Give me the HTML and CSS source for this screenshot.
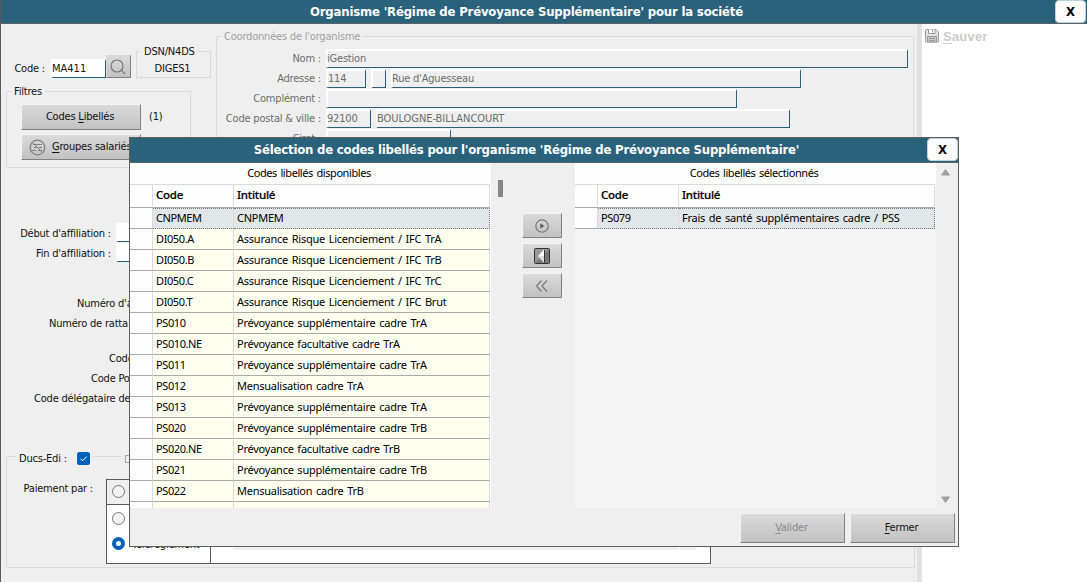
FILE: index.html
```html
<!DOCTYPE html>
<html lang="fr">
<head>
    <meta charset="UTF-8">
    <meta name="viewport" content="width=device-width, initial-scale=1.0">
    <title>Organisme</title>
    <link rel="stylesheet" href="styles.css">
</head>
<body>

<!-- Main window -->
<div class="window">
    <div class="title-bar">
        <h1>Organisme 'Régime de Prévoyance Supplémentaire' pour la société</h1>
        <button class="close-btn">X</button>
    </div>

    <div class="content">
        <div class="form">
            <div class="form-top">
                <div class="left-col">
                    <div class="code-row">
                        <label class="code-label">Code :</label>
                        <div class="field code-field">MA411</div>
                        <button class="btn search-btn">
                            <svg width="16" height="16" viewBox="0 0 16 16" fill="none" stroke="#777" stroke-width="1.200">
                                <circle cx="7" cy="7" r="6"/>
                                <path d="M11.200 11.200l3.800 3.800"/>
                            </svg>
                        </button>
                        <div class="group dsn">
                            <span class="legend">DSN/N4DS</span>
                            DIGES1
                        </div>
                    </div>
                    <div class="group filters">
                        <span class="legend">Filtres</span>
                        <div class="filter-row">
                            <button class="btn filter-btn"><span>Codes <u>L</u>ibellés</span></button>
                            <span>(1)</span>
                        </div>
                        <div class="filter-row">
                            <button class="btn filter-btn with-icon">
                                <svg width="17" height="17" viewBox="0 0 17 17" fill="none" stroke="#808080">
                                    <circle cx="8.500" cy="8.500" r="7.300" stroke-width="1.300"/>
                                    <path d="M4 5.500h9M5 8.500h4M9 11.500h4M4 4l9 9M3 11.500h4M10 8.500h3"/>
                                </svg>
                                <span><u>G</u>roupes salariés</span>
                            </button>
                        </div>
                    </div>
                </div>

                <div class="group address">
                    <span class="legend">Coordonnées de l'organisme</span>
                    <div class="row"><label>Nom :</label><div class="field w-name">iGestion</div></div>
                    <div class="row"><label>Adresse :</label><div class="field w-num">114</div><div class="field w-bis"></div><div class="field w-street">Rue d'Aguesseau</div></div>
                    <div class="row"><label>Complément :</label><div class="field w-extra"></div></div>
                    <div class="row"><label>Code postal &amp; ville :</label><div class="field w-zip">92100</div><div class="field w-city">BOULOGNE-BILLANCOURT</div></div>
                    <div class="row"><label>Siret :</label><div class="field w-siret"></div></div>
                </div>
            </div>

            <div class="details">
                <div class="detail"><label>Début d'affiliation :</label><div class="field date"></div></div>
                <div class="detail end"><label>Fin d'affiliation :</label><div class="field date"></div></div>
                <div class="detail member">Numéro d'a</div>
                <div class="detail link">Numéro de ratta</div>
                <div class="detail code">Code</div>
                <div class="detail post">Code Po</div>
                <div class="detail delegate">Code délégataire de</div>
            </div>

            <div class="group ducs">
                <div class="legend ducs-legend">
                    <span>Ducs-Edi :</span>
                    <svg width="13" height="13" viewBox="0 0 13 13">
                        <rect width="13" height="13" rx="2.500" fill="#005fb8"/>
                        <path d="M3.500 6.700l2.100 2.100 4-4.200" fill="none" stroke="#fff"/>
                    </svg>
                </div>
                <span class="legend dem-legend"><i class="box"></i></span>
                <label class="pay-label">Paiement par :</label>
                <div class="pay">
                    <div class="pay-cell top"><i class="radio"></i></div>
                    <div class="pay-cell top"></div>
                    <div class="pay-cell options">
                        <div class="option"><i class="radio"></i></div>
                        <div class="option"><i class="radio checked"></i><span>Télérèglement</span></div>
                    </div>
                    <div class="pay-cell accounts"><div class="scroll"></div><div class="scroll corner"></div></div>
                </div>
            </div>
        </div>

        <div class="side">
            <svg width="14" height="14" viewBox="0 0 14 14" fill="#e3e3e3" stroke="#999">
                <path d="M.5 1.500q0-1 1-1h9.500l2.500 2.500v9q0 1-1 1h-11q-1 0-1-1z"/>
                <path d="M3.500.5v4h6.500v-4" fill="#fff"/>
                <path d="M7.500 1v2.500"/>
                <path d="M2.500 13v-5.500h9v5.500z" fill="#c8c8c8"/>
                <path d="M4 9.500h6M4 11.500h6"/>
            </svg>
            <span class="save"><u>S</u>auver</span>
        </div>
    </div>
</div>

<!-- Selection dialog -->
<div class="dialog">
    <div class="title-bar">
        <h1>Sélection de codes libellés pour l'organisme 'Régime de Prévoyance Supplémentaire'</h1>
        <button class="close-btn">X</button>
    </div>

    <div class="lists">
        <div class="list">
            <div class="caption">Codes libellés disponibles</div>
            <table>
                <thead>
                    <tr><th class="mark"></th><th class="c-code">Code</th><th>Intitulé</th></tr>
                </thead>
                <tbody>
                    <tr class="selected"><td></td><td>CNPMEM</td><td>CNPMEM</td></tr>
                    <tr><td></td><td>DI050.A</td><td>Assurance Risque Licenciement / IFC TrA</td></tr>
                    <tr><td></td><td>DI050.B</td><td>Assurance Risque Licenciement / IFC TrB</td></tr>
                    <tr><td></td><td>DI050.C</td><td>Assurance Risque Licenciement / IFC TrC</td></tr>
                    <tr><td></td><td>DI050.T</td><td>Assurance Risque Licenciement / IFC Brut</td></tr>
                    <tr><td></td><td>PS010</td><td>Prévoyance supplémentaire cadre TrA</td></tr>
                    <tr><td></td><td>PS010.NE</td><td>Prévoyance facultative cadre TrA</td></tr>
                    <tr><td></td><td>PS011</td><td>Prévoyance supplémentaire cadre TrA</td></tr>
                    <tr><td></td><td>PS012</td><td>Mensualisation cadre TrA</td></tr>
                    <tr><td></td><td>PS013</td><td>Prévoyance supplémentaire cadre TrA</td></tr>
                    <tr><td></td><td>PS020</td><td>Prévoyance supplémentaire cadre TrB</td></tr>
                    <tr><td></td><td>PS020.NE</td><td>Prévoyance facultative cadre TrB</td></tr>
                    <tr><td></td><td>PS021</td><td>Prévoyance supplémentaire cadre TrB</td></tr>
                    <tr><td></td><td>PS022</td><td>Mensualisation cadre TrB</td></tr>
                    <tr><td></td><td></td><td>Prévoyance supplémentaire</td></tr>
                </tbody>
            </table>
        </div>

        <div class="middle">
            <div class="thumb"></div>
            <div class="moves">
                <button class="btn">
                    <svg width="14" height="14" viewBox="0 0 14 14" fill="none" stroke="#777">
                        <circle cx="7" cy="7" r="6.200" stroke-width="1.200"/>
                        <path d="M5.200 4.300L9.500 7l-4.300 2.700z" fill="#666" stroke="none"/>
                    </svg>
                </button>
                <button class="btn">
                    <svg width="16" height="16" viewBox="0 0 16 16">
                        <rect x=".5" y=".5" width="15" height="15" rx="1" fill="#777" stroke="#333"/>
                        <path d="M1 1h14L1 15z" fill="#999"/>
                        <path d="M4 8l6-6.500v13z" fill="#fff"/>
                        <path d="M4 8l6 6.500V8z" fill="#ddd"/>
                        <path d="M10.500 2v12.500" fill="none" stroke="#333"/>
                    </svg>
                </button>
                <button class="btn">
                    <svg width="14" height="14" viewBox="0 0 14 14" fill="none" stroke="#777" stroke-width="1.200">
                        <path d="M6.500 1.500L1.500 7l5 5.500M12 1.500L7 7l5 5.500"/>
                    </svg>
                </button>
            </div>
        </div>

        <div class="list chosen">
            <div class="caption">Codes libellés sélectionnés</div>
            <table>
                <thead>
                    <tr><th class="mark"></th><th class="c-code">Code</th><th>Intitulé</th></tr>
                </thead>
                <tbody>
                    <tr class="selected"><td></td><td>PS079</td><td>Frais de santé supplémentaires cadre / PSS</td></tr>
                </tbody>
            </table>
        </div>

        <div class="scrollbar">
            <svg width="9" height="7" viewBox="0 0 9 7"><path d="M4.500 .5L8.500 6h-8z" fill="#a0a0a0" stroke="#a0a0a0" stroke-linejoin="round"/></svg>
            <svg width="9" height="7" viewBox="0 0 9 7"><path d="M4.500 6.500L8.500 1h-8z" fill="#a0a0a0" stroke="#a0a0a0" stroke-linejoin="round"/></svg>
        </div>
    </div>

    <div class="footer">
        <button class="btn disabled"><span><u>V</u>alider</span></button>
        <button class="btn"><span><u>F</u>ermer</span></button>
    </div>
</div>

</body>
</html>
```
FILE: styles.css
```css
* {
    box-sizing: border-box;
}

body {
    margin: 0;
    width: 1087px;
    height: 582px;
    overflow: hidden;
    position: relative;
    font-family: "DejaVu Sans Condensed", "DejaVu Sans", sans-serif;
    font-stretch: condensed;
    font-size: 11px;
    line-height: 14px;
    letter-spacing: -0.2px;
    color: #111;
    background-color: #fff;
}

svg {
    display: block;
    flex: none;
}

u {
    text-underline-offset: 2px;
}

/* Title bars */
.title-bar {
    display: flex;
    height: 24px;
    background-color: #2b627b;
    border-bottom: 1px solid #5a6468;
}

.title-bar h1 {
    flex: 1;
    margin: 0;
    padding-right: 3px;
    font-size: 13px;
    line-height: 23px;
    letter-spacing: -0.18px;
    text-align: center;
    color: #fff;
    white-space: nowrap;
}

.close-btn {
    width: 31px;
    height: 23px;
    margin-right: 1px;
    padding: 0;
    border: 1px solid #b9d3dd;
    border-radius: 4px;
    background-color: #fdfdfd;
    font: bold 13px "DejaVu Sans Condensed", "DejaVu Sans", sans-serif;
}

/* Buttons */
.btn {
    display: flex;
    align-items: center;
    justify-content: center;
    padding: 0;
    border: 1px solid;
    border-color: #f4f4f4 #808080 #808080 #f4f4f4;
    background: linear-gradient(#dadada, #c2c2c2);
    font: inherit;
    letter-spacing: inherit;
    color: #111;
    white-space: nowrap;
}

.btn span {
    padding: 0 2px 0 0;
}

.btn.disabled {
    color: #888;
}

/* Fields */
.field {
    flex: none;
    height: 19px;
    border-style: solid;
    border-width: 2px 1px 1px 2px;
    border-color: #fff #2b5f78 #2b5f78 #fff;
    line-height: 16px;
    text-indent: -1px;
    white-space: nowrap;
}

/* Main window */
.window {
    height: 582px;
    border-left: 1px solid #5a5a5a;
}

.content {
    display: flex;
    height: 558px;
}

.form {
    width: 921px;
    padding-left: 5px;
    border-right: 5px solid #e1e1e1;
    background-color: #efefef;
}

.side {
    display: flex;
    gap: 4px;
    padding: 5px 0 0 3px;
}

.save {
    padding-top: 1px;
    font: bold 13px/14px "Liberation Sans", Arial, sans-serif;
    letter-spacing: 0.2px;
    color: #ccc;
}

.form-top {
    display: flex;
    height: 144px;
}

.left-col {
    width: 210px;
    padding-top: 27px;
}

.code-row {
    display: flex;
    align-items: flex-end;
    height: 27px;
}

.code-label {
    width: 45px;
    padding: 0 6px 2px 0;
    text-align: right;
    white-space: nowrap;
}

.code-field {
    width: 55px;
    background-color: #fff;
    letter-spacing: 0;
}

.search-btn {
    width: 25px;
    height: 23px;
    padding-right: 2px;
    border-color: #d8d8d8 #808080 #808080 #d8d8d8;
}

/* Group boxes, the legend sits on the border */
.group {
    position: relative;
    border: 1px solid #dadada;
}

.legend {
    position: absolute;
    top: -7px;
    padding: 0 3px;
    background-color: #efefef;
    white-space: nowrap;
}

.dsn {
    width: 75px;
    height: 27px;
    margin-left: 5px;
    padding: 10px 2px 0 0;
    text-align: center;
}

.dsn .legend {
    left: 4px;
}

.filters {
    width: 185px;
    height: 77px;
    margin-top: 13px;
    padding: 12px 0 0 14px;
}

.filters .legend {
    left: 4px;
}

.filter-row {
    display: flex;
    align-items: center;
    gap: 8px;
    height: 26px;
    margin-bottom: 4px;
}

.filter-btn {
    width: 120px;
    height: 26px;
}

.with-icon {
    justify-content: flex-start;
    gap: 6px;
    padding-left: 7px;
}

.address {
    width: 698px;
    height: 150px;
    margin-top: 12px;
    padding-top: 12px;
    color: #6c6c6c;
}

.address .legend {
    left: 4px;
    color: #a0a0a0;
}

.row {
    display: flex;
    gap: 5px;
    height: 20px;
}

.row label {
    width: 104px;
    padding-top: 3px;
    text-align: right;
    white-space: nowrap;
}

.w-name {
    width: 582px;
}

.w-num {
    width: 40px;
    text-indent: 0;
}

.w-bis {
    width: 15px;
}

.w-street {
    width: 410px;
}

.w-extra {
    width: 411px;
}

.w-zip {
    width: 45px;
}

.w-city {
    width: 414px;
    letter-spacing: -0.05px;
}

.w-siret {
    width: 125px;
}

/* Affiliation details */
.details {
    height: 288px;
    padding-top: 55px;
}

.detail {
    display: flex;
    height: 20px;
    padding-top: 4px;
    white-space: nowrap;
}

.detail label {
    width: 105px;
    text-align: right;
}

.detail .date {
    width: 80px;
    margin: -4px 0 0 5px;
    background-color: #fff;
}

.end {
    margin-bottom: 30px;
}

.member {
    padding-left: 71px;
}

.link {
    margin-bottom: 15px;
    padding-left: 43px;
}

.code {
    padding-left: 103px;
}

.post {
    padding-left: 85px;
}

.delegate {
    padding-left: 28px;
}

/* Ducs-Edi */
.ducs {
    display: flex;
    width: 909px;
    height: 112px;
    padding-top: 22px;
}

.ducs-legend {
    display: flex;
    gap: 10px;
    left: 9px;
    top: -5px;
    height: 14px;
}

.ducs-legend span {
    width: 48px;
}

.dem-legend {
    left: 114px;
    width: 40px;
}

.box {
    display: block;
    width: 8px;
    height: 8px;
    margin: 5px 0 0 1px;
    border: 1px solid #aaa;
}

.pay-label {
    width: 99px;
    padding: 3px 13px 0 0;
    text-align: right;
    white-space: nowrap;
}

.pay {
    display: grid;
    grid-template-columns: 104px 499px;
    grid-template-rows: 25px 59px;
    width: 605px;
    height: 85px;
    border: 1px solid #5a5a5a;
    border-width: 1px 1px 0 1px;
}

.pay-cell {
    padding: 5px;
    border-bottom: 1px solid #5a5a5a;
    background-color: #fff;
}

.pay-cell:nth-child(odd) {
    border-right: 1px solid #5a5a5a;
}

.pay-cell.top {
    background-color: #efefef;
}

.options {
    padding-top: 7px;
}

.option {
    display: flex;
    gap: 7px;
    height: 25px;
}

.option span {
    padding-top: 1px;
}

.radio {
    flex: none;
    display: block;
    width: 13px;
    height: 13px;
    border: 1px solid #777;
    border-radius: 50%;
    background-color: #f4f4f4;
}

.radio.checked {
    border: 4px solid #005fb8;
    background-color: #fff;
}

.accounts {
    display: flex;
    gap: 1px;
    padding: 0 14px 0 22px;
}

.scroll {
    flex: 1;
    height: 45px;
    background-color: #efefef;
}

.corner {
    flex: none;
    width: 16px;
}

/* Selection dialog */
.dialog {
    position: absolute;
    left: 129px;
    top: 137px;
    width: 830px;
    height: 410px;
    border: 1px solid #5e5e5e;
    background-color: #efefef;
    color: #151515;
}

.dialog .title-bar {
    height: 25px;
}

.dialog .title-bar h1 {
    padding-right: 4px;
    line-height: 24px;
    letter-spacing: -0.2px;
}

.dialog .close-btn {
    margin-right: 0;
}

.lists {
    display: flex;
    height: 345px;
}

.list {
    width: 361px;
    overflow: hidden;
    background-color: #fdfdfd;
    font-family: "Noto Sans", "Open Sans", sans-serif;
    font-stretch: normal;
    letter-spacing: -0.24px;
    word-spacing: 1.1px;
    color: #000;
}

.chosen {
    background-color: #f5f5f5;
}

.caption {
    height: 21px;
    padding-right: 3px;
    background-color: #fdfdfd;
    line-height: 19px;
    text-align: center;
    letter-spacing: -0.42px;
}

.list table {
    width: 360px;
    table-layout: fixed;
    border-collapse: separate;
    border-spacing: 0;
    border-top: 1px solid #dadada;
}

.list th,
.list td {
    padding: 0 3px;
    border-right: 1px solid #dadada;
    border-bottom: 1px solid #aaa;
    text-align: left;
    white-space: nowrap;
}

.list th {
    height: 23px;
    padding-bottom: 3px;
    background-color: #fdfdfd;
    font-size: 11.5px;
    font-weight: 500;
    -webkit-text-stroke: 0.2px #000;
}

.list td {
    height: 21px;
    line-height: 18px;
    background-color: #fffff0;
}

.mark {
    width: 23px;
}

.c-code {
    width: 81px;
}

.list td:nth-child(2) {
    letter-spacing: -0.4px;
}

.list td:first-child {
    background-color: #fdfdfd;
}

.list .selected td {
    padding-bottom: 2px;
    background-color: #e1e6e9;
}

.list .selected td:first-child {
    background-color: #fdfdfd;
}

.list .selected td + td {
    border-top: 1px dotted #777;
    border-bottom: 1px dotted #777;
    line-height: 17px;
}

.list .selected td:last-child {
    border-right: 1px dotted #777;
}

.middle {
    display: flex;
    width: 84px;
}

.thumb {
    width: 5px;
    height: 17px;
    margin: 17px 0 0 7px;
    background-color: #868686;
}

.moves {
    display: flex;
    flex-direction: column;
    gap: 5px;
    margin: 50px 0 0 19px;
}

.moves .btn {
    width: 40px;
    height: 25px;
}

.scrollbar {
    display: flex;
    flex-direction: column;
    align-items: center;
    justify-content: space-between;
    flex: 1;
    padding: 6px 4px 5px 0;
}

.footer {
    display: flex;
    justify-content: flex-end;
    gap: 5px;
    padding: 5px 3px 0 0;
}

.footer .btn {
    width: 105px;
    height: 30px;
}
```
